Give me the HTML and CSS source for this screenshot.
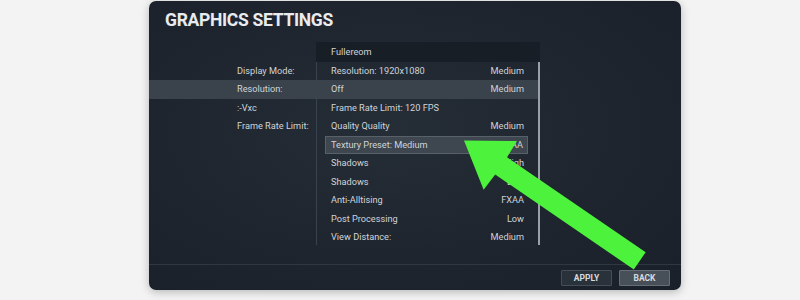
FILE: index.html
```html
<!DOCTYPE html>
<html>
<head>
<meta charset="utf-8">
<link rel="stylesheet" href="styles.css">
</head>
<body>
<div class="stage">
  <div class="panel">
    <h1 class="title">GRAPHICS SETTINGS</h1>
    <div class="content">
      <div class="labels">
        <div class="head-spacer"></div>
        <div class="lrow">Display Mode:</div>
        <div class="lrow sel">Resolution:</div>
        <div class="lrow">:-Vxc</div>
        <div class="lrow">Frame Rate Limit:</div>
      </div>
      <div class="list">
        <div class="list-head">Fullereom</div>
        <div class="items">
          <div class="row"><span>Resolution: 1920x1080</span><span>Medium</span></div>
          <div class="row sel"><span>Off</span><span>Medium</span></div>
          <div class="row"><span>Frame Rate Limit: 120 FPS</span><span></span></div>
          <div class="row"><span>Quality Quality</span><span>Medium</span></div>
          <div class="row focus"><span>Textury Preset: Medium</span><span>FXAA</span></div>
          <div class="row"><span>Shadows</span><span>High</span></div>
          <div class="row"><span>Shadows</span><span>Low</span></div>
          <div class="row"><span>Anti-Alltising</span><span>FXAA</span></div>
          <div class="row"><span>Post Processing</span><span>Low</span></div>
          <div class="row"><span>View Distance:</span><span>Medium</span></div>
        </div>
      </div>
    </div>
    <div class="footer">
      <button class="btn">APPLY</button>
      <button class="btn btn-back">BACK</button>
    </div>
  </div>
  <svg class="arrow" width="800" height="300" viewBox="0 0 800 300">
    <polygon transform="translate(464 140.5) rotate(34.4)" points="0,0 44,29.5 45,10.5 213,10.5 213,-10.5 45,-10.5 44,-29.5" fill="#4cf23b"/>
  </svg>
</div>
</body>
</html>
```
FILE: styles.css
```css
* { box-sizing: border-box; }
html, body { margin: 0; padding: 0; }
body {
  background: #f3f3f3;
  font-family: Roboto, "Noto Sans", sans-serif;
  width: 800px;
  height: 300px;
  overflow: hidden;
}
.stage {
  position: relative;
  width: 800px;
  height: 300px;
  padding-top: 1px;
}
.panel {
  margin-left: 149px;
  width: 532px;
  height: 289px;
  border-radius: 7px;
  background: radial-gradient(ellipse at 45% 45%, #252d37 0%, #1e252f 55%, #1a2029 100%);
  box-shadow: 0 2px 8px rgba(0,0,0,0.25);
  display: flex;
  flex-direction: column;
  color: #d0d4d8;
}
.title {
  margin: 0;
  padding: 8px 0 0 16px;
  height: 41px;
  font-size: 17.5px;
  line-height: 22px;
  font-weight: 700;
  color: #e9ebee;
  letter-spacing: -0.3px;
}
.content {
  display: flex;
  height: 221px;
  font-size: 9.2px;
}
.labels {
  width: 167px;
  display: flex;
  flex-direction: column;
}
.head-spacer { height: 20px; }
.lrow {
  height: 18.45px;
  line-height: 18.45px;
  padding-left: 88px;
  white-space: nowrap;
}
.lrow.sel, .row.sel { background: #3a424b; }
.list {
  width: 224px;
  display: flex;
  flex-direction: column;
}
.list-head {
  height: 20px;
  line-height: 20px;
  padding-left: 15px;
  background: #181e26;
}
.items {
  border-left: 1px solid #3a434d;
  border-right: 2px solid #9aa0a7;
  height: 183px;
}
.row {
  display: flex;
  justify-content: space-between;
  height: 18.45px;
  line-height: 18.45px;
  padding: 0 14px 0 14px;
  white-space: nowrap;
}
.row.focus {
  margin: 0 10px 0 8px;
  padding: 0 4px 0 5px;
  background: #3e464f;
  border: 1px solid #58606a;
  line-height: 16.45px;
}
.footer {
  border-top: 1px solid #2f3741;
  margin-top: 1px;
  display: flex;
  justify-content: flex-end;
  gap: 7px;
  padding: 5px 11px 0 0;
}
.btn {
  width: 51px;
  height: 16px;
  padding: 0;
  font-family: Roboto, "Noto Sans", sans-serif;
  font-size: 8.5px;
  font-weight: 700;
  color: #d6dade;
  background: #29313a;
  border: 1px solid #454d56;
  border-radius: 1px;
}
.btn-back {
  background: #474f58;
  border-color: #656d76;
}
.arrow {
  position: absolute;
  left: 0;
  top: 0;
  pointer-events: none;
}
```
